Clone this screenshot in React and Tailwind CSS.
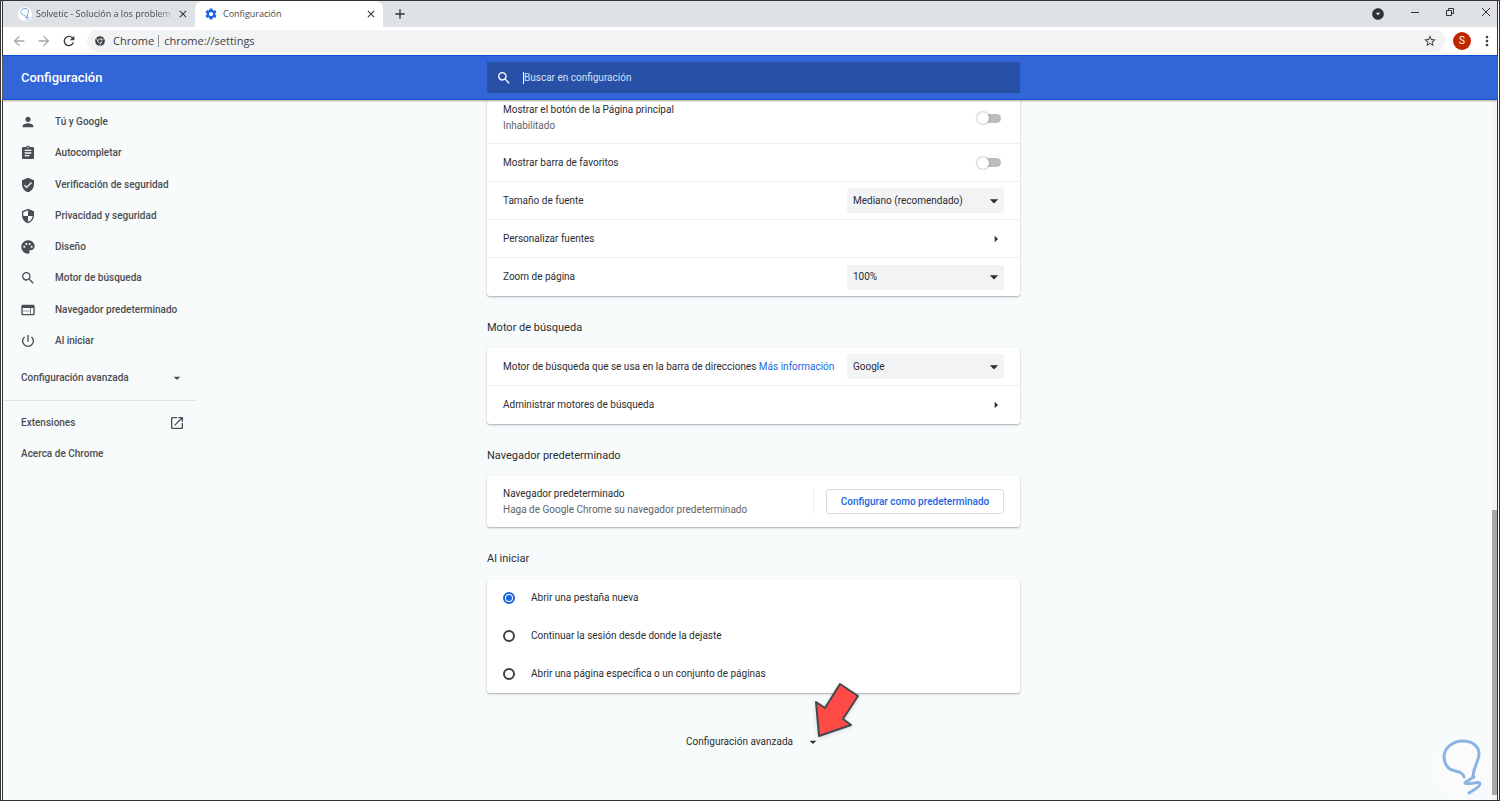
import { useState } from "react";
import {
    MdArrowBack,
    MdArrowDropDown,
    MdArrowDropDownCircle,
    MdArrowForward,
    MdArrowRight,
    MdAdd,
    MdAssignment,
    MdClose,
    MdMoreVert,
    MdOpenInNew,
    MdPalette,
    MdPerson,
    MdPowerSettingsNew,
    MdRefresh,
    MdSearch,
    MdSecurity,
    MdSettings,
    MdStarBorder,
    MdVerifiedUser,
    MdWeb,
} from "react-icons/md";
import { FaChrome } from "react-icons/fa";

const menu = [
    { icon: MdPerson, label: "Tú y Google" },
    { icon: MdAssignment, label: "Autocompletar" },
    { icon: MdVerifiedUser, label: "Verificación de seguridad" },
    { icon: MdSecurity, label: "Privacidad y seguridad" },
    { icon: MdPalette, label: "Diseño" },
    { icon: MdSearch, label: "Motor de búsqueda" },
    { icon: MdWeb, label: "Navegador predeterminado" },
    { icon: MdPowerSettingsNew, label: "Al iniciar" },
];

const startup = [
    "Abrir una pestaña nueva",
    "Continuar la sesión desde donde la dejaste",
    "Abrir una página específica o un conjunto de páginas",
];

function Bulb({ className }) {
    return (
        <svg viewBox="0 0 42 56" className={className} fill="none" stroke="currentColor" strokeLinecap="round">
            <path d="M22 38C20 32 15 33 10 31C4 29 2 22 2 17C3 8 11 2 21 2C30 2 37 7 37 15C37 22 32 26 31 37" />
            <path d="M32 38C29 40 24 42 23 44C24 47 38 41 38 45C37 49 31 51 27 54" />
        </svg>
    );
}

function TabBar() {
    return (
        <div className="flex h-[26px] shrink-0 items-stretch bg-[#dee1e6] font-['Open_Sans',sans-serif] text-[9px] text-[#45484c]">
            <div className="flex w-48 items-center rounded-br-lg pl-[15px]">
                <span className="flex size-[14px] shrink-0 items-center justify-center rounded-full bg-white">
                    <Bulb className="size-3 stroke-[4] text-[#5a94dc]" />
                </span>
                <span className="ml-1 flex-1 whitespace-nowrap [mask-image:linear-gradient(to_right,black_85%,transparent)]">
                    Solvetic - Solución a los problem
                </span>
                <button aria-label="Cerrar pestaña" className="mr-[6px]">
                    <MdClose className="size-3 text-[#303236]" />
                </button>
            </div>
            <div className="flex w-[188px] items-center rounded-t-lg bg-white pr-[6px] pl-[9px]">
                <MdSettings className="size-[14px] text-[#1a66e0]" />
                <span className="ml-[5px] flex-1">Configuración</span>
                <button aria-label="Cerrar pestaña">
                    <MdClose className="size-3 text-[#303236]" />
                </button>
            </div>
            <button aria-label="Nueva pestaña" className="ml-[9px]">
                <MdAdd className="size-4 text-[#303236]" />
            </button>
            <div className="ml-auto flex items-center gap-[26px] pr-[6px] text-[#303236]">
                <button aria-label="Buscar pestañas">
                    <MdArrowDropDownCircle className="size-[14px]" />
                </button>
                <button aria-label="Minimizar" className="mb-1 h-px w-2 bg-[#303236]" />
                <button aria-label="Restaurar" className="mb-1">
                    <svg viewBox="0 0 10 10" className="size-[10px]" fill="none" stroke="currentColor">
                        <path d="M1.5 3.5h5v5h-5zM3.5 3.5v-2h5v5h-2" />
                    </svg>
                </button>
                <button aria-label="Cerrar" className="mb-1">
                    <svg viewBox="0 0 10 10" className="size-[10px]" fill="none" stroke="currentColor">
                        <path d="M1 1l8 8M9 1l-8 8" />
                    </svg>
                </button>
            </div>
        </div>
    );
}

function Toolbar() {
    return (
        <div className="flex h-7 shrink-0 items-center bg-white pr-[2px] pl-2 text-[#3c4043]">
            <button aria-label="Atrás">
                <MdArrowBack className="size-4 text-[#a3a6aa]" />
            </button>
            <button aria-label="Adelante" className="ml-[9px]">
                <MdArrowForward className="size-4 text-[#a3a6aa]" />
            </button>
            <button aria-label="Recargar" className="ml-[9px]">
                <MdRefresh className="size-4" />
            </button>
            <div className="ml-[10px] flex h-[22px] flex-1 items-center rounded-full bg-[#f1f3f4] px-2 font-['Open_Sans',sans-serif] text-[11px]">
                <FaChrome className="size-[10px]" />
                <span className="ml-2">Chrome</span>
                <span className="mx-1 h-3 w-px bg-[#909397]" />
                <input
                    aria-label="Barra de direcciones"
                    defaultValue="chrome://settings"
                    className="ml-px min-w-0 flex-1 bg-transparent outline-none"
                />
                <button aria-label="Añadir a favoritos">
                    <MdStarBorder className="size-[14px]" />
                </button>
            </div>
            <button
                aria-label="Perfil"
                className="ml-2 size-[18px] rounded-full bg-[#bf2600] text-[10px] leading-[18px] text-white"
            >
                S
            </button>
            <button aria-label="Menú" className="ml-2">
                <MdMoreVert className="size-4" />
            </button>
        </div>
    );
}

function Header() {
    return (
        <header className="z-10 grid h-[45px] shrink-0 grid-cols-[1fr_533px_1fr] items-center border-y border-[#0b4fd8] bg-[#3165d8] pl-[7px] text-white shadow-[0_1px_2px_#b9a98a]">
            <h1 className="pl-[11px] text-[13px] font-medium">Configuración</h1>
            <label className="flex h-[31px] items-center bg-[#2850a6] pl-[9px]">
                <MdSearch className="size-4" />
                <input
                    type="search"
                    placeholder="Buscar en configuración"
                    className="ml-[11px] h-3 flex-1 border-l border-white bg-transparent text-[10px] outline-none placeholder:text-[#d6e0f5]"
                />
            </label>
        </header>
    );
}

function Sidebar() {
    return (
        <nav className="-ml-[7px] w-[194px] pt-[10px] text-[10px] font-medium text-[#4b4d51]">
            <ul className="flex h-[243px] flex-col justify-between">
                {menu.map(({ icon: Icon, label }) => (
                    <li key={label}>
                        <a href="#" className="flex h-6 items-center pl-[17px]">
                            <Icon className="size-4 shrink-0" />
                            <span className="ml-[19px] whitespace-nowrap">{label}</span>
                        </a>
                    </li>
                ))}
            </ul>
            <button className="mt-[13px] flex h-6 w-full items-center justify-between pr-3 pl-[18px]">
                Configuración avanzada
                <MdArrowDropDown className="size-4" />
            </button>
            <hr className="mt-[10px] mb-[10px] border-[#e1e4e7]" />
            <a href="#" className="flex h-6 items-center justify-between pr-3 pl-[18px]">
                Extensiones
                <MdOpenInNew className="size-4" />
            </a>
            <a href="#" className="mt-[7px] flex h-6 items-center pl-[18px]">
                Acerca de Chrome
            </a>
        </nav>
    );
}

function Card({ children, className = "" }) {
    return (
        <div className={`rounded-[3px] bg-white shadow-[0_1px_2px_#a9adb2] ${className}`}>
            {children}
        </div>
    );
}

function Section({ title, children }) {
    return (
        <section>
            <h2 className="pt-6 pb-3 text-[11px] leading-4 text-[#2b2d30]">{title}</h2>
            {children}
        </section>
    );
}

function Select({ id, value }) {
    return (
        <div className="grid w-[157px] shrink-0 items-center">
            <select
                id={id}
                defaultValue={value}
                className="col-start-1 row-start-1 h-[25px] w-full appearance-none rounded-[3px] bg-[#f1f3f4] pl-[6px] text-[10px]"
            >
                <option>{value}</option>
            </select>
            <MdArrowDropDown className="pointer-events-none col-start-1 row-start-1 size-5 justify-self-end" />
        </div>
    );
}

function Toggle({ id }) {
    return (
        <input
            id={id}
            type="checkbox"
            role="switch"
            className="mr-[3px] flex h-[9px] w-[22px] appearance-none items-center rounded-full bg-[#bdbdbd] before:-ml-[2px] before:size-3 before:rounded-full before:bg-white before:shadow-[0_0_2px_#777] checked:justify-end checked:bg-[#8ab4f8]"
        />
    );
}

function SelectRow({ id, label, value }) {
    return (
        <div className="flex h-[38px] items-center justify-between px-4">
            <label htmlFor={id}>{label}</label>
            <Select id={id} value={value} />
        </div>
    );
}

function LinkRow({ label }) {
    return (
        <button className="flex h-[38px] w-full items-center justify-between pr-4 pl-4">
            {label}
            <MdArrowRight className="size-4" />
        </button>
    );
}

function Pointer() {
    return (
        <svg viewBox="0 0 48 58" className="absolute bottom-[15px] left-full -ml-[9px] h-[58px] w-12 drop-shadow-sm">
            <path
                d="M28 3L46 15L31 38L39 44L7 55L4 21L13 27Z"
                fill="#ff4b47"
                stroke="#45484c"
                strokeWidth="2"
                strokeLinejoin="round"
            />
        </svg>
    );
}

export default function App() {
    const [selected, setSelected] = useState(0);

    return (
        <div className="h-screen overflow-hidden border border-[#333] bg-white px-px font-[Roboto,sans-serif] text-[10px] leading-4 text-[#2b2d30]">
            <div className="flex h-full flex-col border-x border-[#333]">
                <TabBar />
                <Toolbar />
                <Header />

                {/* Contenido desplazable */}
                <div className="relative flex min-h-0 flex-1 bg-[#f8fbfc]">
                    <div className="grid flex-1 grid-cols-[1fr_533px_1fr] overflow-hidden pl-[7px]">
                        <Sidebar />

                        <main className="-mt-[7px]">
                            <Card className="divide-y divide-[#eceef0]">
                                <div className="flex h-[51px] items-center justify-between px-4">
                                    <label htmlFor="home">
                                        Mostrar el botón de la Página principal
                                        <span className="block text-[#5f6368]">Inhabilitado</span>
                                    </label>
                                    <Toggle id="home" />
                                </div>
                                <div className="flex h-[38px] items-center justify-between px-4">
                                    <label htmlFor="bookmarks">Mostrar barra de favoritos</label>
                                    <Toggle id="bookmarks" />
                                </div>
                                <SelectRow id="size" label="Tamaño de fuente" value="Mediano (recomendado)" />
                                <LinkRow label="Personalizar fuentes" />
                                <SelectRow id="zoom" label="Zoom de página" value="100%" />
                            </Card>

                            <Section title="Motor de búsqueda">
                                <Card className="divide-y divide-[#eceef0]">
                                    <div className="flex h-[38px] items-center justify-between px-4">
                                        <span className="whitespace-nowrap">
                                            <label htmlFor="engine">
                                                Motor de búsqueda que se usa en la barra de direcciones
                                            </label>{" "}
                                            <a href="#" className="text-[#1a66e0]">
                                                Más información
                                            </a>
                                        </span>
                                        <Select id="engine" value="Google" />
                                    </div>
                                    <LinkRow label="Administrar motores de búsqueda" />
                                </Card>
                            </Section>

                            <Section title="Navegador predeterminado">
                                <Card className="flex h-[51px] items-center px-4">
                                    <div className="flex-1">
                                        <p>Navegador predeterminado</p>
                                        <p className="text-[#5f6368]">
                                            Haga de Google Chrome su navegador predeterminado
                                        </p>
                                    </div>
                                    <div className="border-l border-[#eceef0] pl-3">
                                        <button className="h-[25px] w-[178px] rounded-[3px] border border-[#dadce0] font-medium text-[#1a66e0]">
                                            Configurar como predeterminado
                                        </button>
                                    </div>
                                </Card>
                            </Section>

                            <Section title="Al iniciar">
                                <Card>
                                    {startup.map((label, i) => (
                                        <label key={label} className="flex h-[38px] items-center pl-4">
                                            <input
                                                type="radio"
                                                name="startup"
                                                checked={selected === i}
                                                onChange={() => setSelected(i)}
                                                className="flex size-3 appearance-none items-center justify-center rounded-full border-2 border-[#3c4043] checked:border-[#1a66e0] checked:before:size-[6px] checked:before:rounded-full checked:before:bg-[#1a66e0]"
                                            />
                                            <span className="ml-4">{label}</span>
                                        </label>
                                    ))}
                                </Card>
                            </Section>

                            <div className="mt-[37px] flex justify-center">
                                <div className="relative">
                                    <button className="flex h-6 items-center gap-3">
                                        Configuración avanzada
                                        <MdArrowDropDown className="size-4" />
                                    </button>
                                    <Pointer />
                                </div>
                            </div>
                        </main>
                    </div>

                    {/* Barra de desplazamiento */}
                    <div className="absolute inset-y-0 right-0 flex w-[5px] flex-col justify-end bg-[#f1f3f4] pb-[5px]">
                        <div className="h-[41%] bg-[#a8a8a8]" />
                    </div>

                    <div className="absolute right-[6px] bottom-[5px] flex size-14 items-center justify-center rounded-full bg-[#fbfbfb]">
                        <Bulb className="h-14 w-[42px] stroke-[3] text-[#8ab4e6]" />
                    </div>
                </div>
            </div>
        </div>
    );
}
